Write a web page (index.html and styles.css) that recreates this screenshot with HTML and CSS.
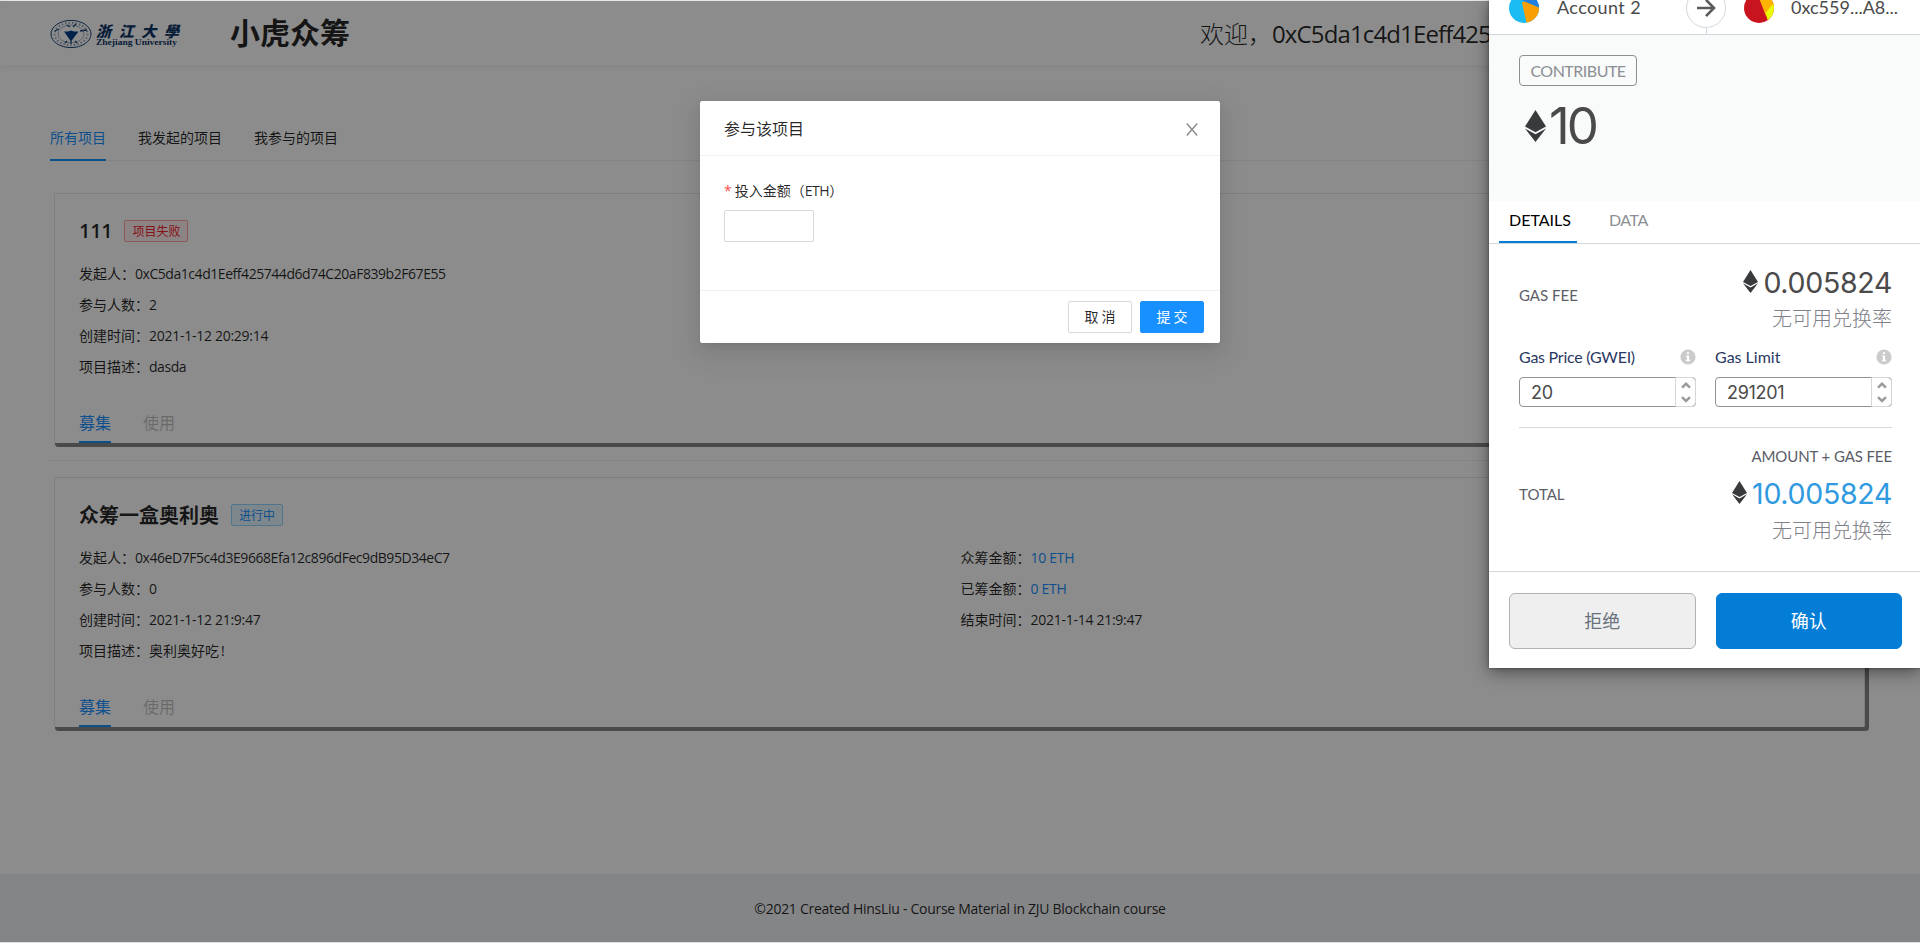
FILE: index.html
```html
<!DOCTYPE html>
<html lang="zh-CN">
<head>
<meta charset="utf-8">
<title>小虎众筹</title>
<link rel="stylesheet" href="styles.css">
</head>
<body>
<svg width="0" height="0" class="defs">
  <symbol id="eth" viewBox="0 0 21 32">
    <path d="M10.5 0 0 16.6 10.5 22.3 21 16.6Z"/>
    <path d="M0 18.4 10.5 32 21 18.4 10.5 24.3Z"/>
  </symbol>
  <symbol id="info" viewBox="0 0 16 16">
    <circle cx="8" cy="8" r="7.6"/>
    <path fill="#fff" d="M6.9 3.2h2.2v1.9H6.9zM6.1 6.4h3v4.4h.9v1.5H6v-1.5h.9V7.9h-.8z"/>
  </symbol>
  <symbol id="steps" viewBox="0 0 10 22">
    <path d="M1 6.6 5 2.8 9 6.600M1 16.200 5 20 9 16.200" fill="none" stroke="#9b9b9b" stroke-width="2.5"/>
  </symbol>
</svg>

<div class="page">
  <header class="header">
    <svg class="logo" width="132" height="32" viewBox="0 0 132 32">
      <g fill="none" stroke="#1b4478">
        <ellipse cx="21" cy="16" rx="20" ry="13.6" stroke-width="1"/>
        <ellipse cx="21" cy="16" rx="16.500" ry="11.2" stroke-width="2" stroke-dasharray="1.500 2" opacity=".5"/>
        <ellipse cx="21" cy="16" rx="13" ry="9" stroke-width=".6" opacity=".7"/>
        <path d="M5 13l4-2M30 13l7-1M17 7l3 2M23 9l3-3M15 25l2-2M21 26v-3M27 25l-2-2" stroke-width="1.3"/>
      </g>
      <path fill="#003f88" d="M14 13.5h4l3-1 3 1h4.500L21 23.500Z"/>
      <text class="logo-cn" x="46" y="18.500" textLength="83">浙江大學</text>
      <text class="logo-en" x="46" y="27" textLength="81" lengthAdjust="spacingAndGlyphs">Zhejiang University</text>
    </svg>
    <h1 class="brand">小虎众筹</h1>
    <div class="welcome">欢迎，<span class="en">0xC5da1c4d1Eeff425744d6d74C20aF839b2F67E55</span></div>
  </header>

  <main class="content">
    <nav class="tabs">
      <span class="tab active">所有项目</span>
      <span class="tab">我发起的项目</span>
      <span class="tab">我参与的项目</span>
    </nav>

    <div class="item">
      <section class="card">
        <div class="card-head"><h2 class="en">111</h2><span class="tag red">项目失败</span></div>
        <div class="cols">
          <div class="col">
            <p>发起人：<span class="en">0xC5da1c4d1Eeff425744d6d74C20aF839b2F67E55</span></p>
            <p>参与人数：<span class="en">2</span></p>
            <p>创建时间：<span class="en date">2021-1-12 20:29:14</span></p>
            <p>项目描述：<span class="en">dasda</span></p>
          </div>
        </div>
        <div class="card-tabs"><span class="active">募集</span><span>使用</span></div>
      </section>
    </div>

    <div class="item last">
      <section class="card">
        <div class="card-head"><h2>众筹一盒奥利奥</h2><span class="tag blue">进行中</span></div>
        <div class="cols">
          <div class="col">
            <p>发起人：<span class="en">0x46eD7F5c4d3E9668Efa12c896dFec9dB95D34eC7</span></p>
            <p>参与人数：<span class="en">0</span></p>
            <p>创建时间：<span class="en date">2021-1-12 21:9:47</span></p>
            <p>项目描述：奥利奥好吃<span class="en bang">!</span></p>
          </div>
          <div class="col second">
            <p>众筹金额：<span class="en money">10 ETH</span></p>
            <p>已筹金额：<span class="en money">0 ETH</span></p>
            <p>结束时间：<span class="en date">2021-1-14 21:9:47</span></p>
          </div>
        </div>
        <div class="card-tabs"><span class="active">募集</span><span>使用</span></div>
      </section>
    </div>
  </main>

  <footer class="footer">©2021 Created HinsLiu - Course Material in ZJU Blockchain course</footer>
</div>

<div class="mask"></div>

<div class="modal">
  <div class="modal-head"><span>参与该项目</span>
    <svg width="12" height="13" viewBox="0 0 12 13"><path d="M.8.6 11.200 12.400M11.200.6.8 12.400" stroke="#8c8c8c" stroke-width="1.5"/></svg>
  </div>
  <div class="modal-body">
    <label class="label"><i>*</i>投入金额（<span class="en">ETH</span>）</label>
    <input class="amount" type="text">
  </div>
  <div class="modal-foot">
    <button class="btn">取 消</button><button class="btn primary">提 交</button>
  </div>
</div>

<aside class="wallet">
  <div class="w-head">
    <svg class="avatar" width="30" height="30" viewBox="0 0 30 30"><clipPath id="c1"><circle cx="15" cy="15" r="15"/></clipPath><g clip-path="url(#c1)"><path fill="#1bbcf4" d="M0 0h30v30H0z"/><path fill="#f89f04" d="M13 9.500 16 8 30 14.500V30H17.500Z"/><path fill="#2080e2" d="M10 0h20v14.500L13.500 7.500Z"/></g></svg>
    <span class="name from">Account 2</span>
    <span class="arrow"><svg width="20" height="20" viewBox="0 0 20 20"><path d="M1 10h16M10 1.800 18 10 10 18.200" fill="none" stroke="#5b5b5b" stroke-width="2.6"/></svg></span>
    <svg class="avatar to-av" width="30" height="30" viewBox="0 0 30 30"><g clip-path="url(#c1)"><path fill="#c8141f" d="M0 0h30v30H0z"/><path fill="#ffb400" d="M13 0h17v14L22 23Z"/><path fill="#e9fb07" d="M30 10 21.500 20 24.500 30H30Z"/></g></svg>
    <span class="name to">0xc559...A8...</span>
  </div>
  <div class="w-summary">
    <span class="method"><span>CONTRIBUTE</span></span>
    <div class="big"><svg width="21" height="32"><use href="#eth"/></svg><span>10</span></div>
  </div>
  <div class="w-tabs"><span class="active"><b>DETAILS</b></span><span class="data"><b>DATA</b></span></div>
  <div class="w-body">
    <div class="fee">
      <span class="cap gasfee">GAS FEE</span>
      <div class="vals">
        <div class="val"><svg width="15" height="23"><use href="#eth"/></svg><span>0.005824</span></div>
        <div class="norate">无可用兑换率</div>
      </div>
    </div>
    <div class="gas">
      <div class="field"><div class="f-label"><span class="gp">Gas Price (GWEI)</span><svg width="16" height="16" fill="#cbcbcb"><use href="#info"/></svg></div>
        <div class="f-input"><span>20</span><i><svg width="10" height="22"><use href="#steps"/></svg></i></div></div>
      <div class="field"><div class="f-label"><span class="gl">Gas Limit</span><svg width="16" height="16" fill="#cbcbcb"><use href="#info"/></svg></div>
        <div class="f-input"><span>291201</span><i><svg width="10" height="22"><use href="#steps"/></svg></i></div></div>
    </div>
    <div class="sum">
      <span class="cap total">TOTAL</span>
      <div class="vals">
        <div class="cap amt">AMOUNT + GAS FEE</div>
        <div class="val blue"><svg width="15" height="23"><use href="#eth"/></svg><span>10.005824</span></div>
        <div class="norate">无可用兑换率</div>
      </div>
    </div>
  </div>
  <div class="w-foot"><button class="w-btn">拒绝</button><button class="w-btn ok">确认</button></div>
</aside>
</body>
</html>
```
FILE: styles.css
```css
* { box-sizing: border-box; }
html, body { margin: 0; height: 943px; overflow: hidden; }
body {
  position: relative;
  padding-top: 1px;
  background: #dee1e6;
  color: rgba(0, 0, 0, .85);
  font: 14px/22px "Noto Sans CJK SC", sans-serif;
}
h1, h2, p { margin: 0; }
svg { display: block; flex: none; }
.defs { position: absolute; }
.en { font-family: "Open Sans", "Noto Sans CJK SC", sans-serif; letter-spacing: -.45px; }
.en.date, .en.money { letter-spacing: -.27px; }
.en.bang { margin-left: 2px; }

.page { display: flex; flex-direction: column; height: 941px; background: #fff; }
.header {
  display: flex; align-items: center; flex: none; height: 64px; padding: 0 50px;
  box-shadow: 0 2px 8px #f0f1f2; overflow: hidden;
  white-space: nowrap;
}
.logo { margin: 2px 48px 0 0; }
.logo-cn { font: italic 900 15px "Noto Sans CJK SC", sans-serif; fill: #0d3566; }
.logo-en { font: bold 7.500px "Liberation Serif", serif; fill: #0d3566; }
.brand { font-size: 30px; line-height: 60px; height: 64px; font-weight: 700; width: 970px; }
.welcome { font-size: 24px; font-weight: 300; line-height: 64px; }
.welcome .en { letter-spacing: -.87px; font-weight: 400; }

.content { flex: 1; padding: 50px 50px 0; }
.tabs { display: flex; gap: 32px; height: 46px; border-bottom: 1px solid #f0f0f0; }
.tab { height: 46px; padding-top: 11px; }
.tab.active { color: #1890ff; border-bottom: 2px solid #1890ff; }
.item { height: 284px; padding: 16px 4px 0; border-bottom: 1px solid #f0f0f0; margin-top: 16px; }
.item.last { margin-top: 0; border: 0; }
.card {
  height: 250px; padding: 24px 24px 0; border: 1px solid #e6e6e6; border-bottom: 0; border-radius: 2px;
  width: 1811px; display: flex; flex-direction: column;
  box-shadow: 2.500px 2.500px 0 1.500px #888;
}
.card-head { display: flex; align-items: center; gap: 12px; height: 26px; }
.card-head h2 { font-size: 20px; line-height: 26px; font-weight: 600; }
.card-head h2.en { letter-spacing: -.3px; }
.tag { font-size: 12px; line-height: 20px; padding: 0 7px; border: 1px solid; border-radius: 2px; }
.tag.red { color: #f5222d; background: #fff1f0; border-color: #ffa39e; }
.tag.blue { color: #1890ff; background: #e6f7ff; border-color: #91d5ff; }
.cols { display: grid; grid-template-columns: 1fr 1fr; margin-top: 18px; flex: 1; }
.col p { height: 31px; line-height: 22px; white-space: nowrap; }
.second { padding-left: 1px; }
.money { color: #1890ff; }
.card-tabs { display: flex; gap: 32px; font-size: 16px; color: rgba(0,0,0,.25); }
.card-tabs span { height: 33px; line-height: 24px; }
.card-tabs .active { color: #1890ff; border-bottom: 2px solid #1890ff; }
.footer {
  flex: none; height: 68px; background: #f0f2f5; text-align: center; line-height: 70px;
  font-family: "Open Sans", sans-serif; letter-spacing: -.28px;
}
.mask { position: absolute; inset: 1px 0; background: rgba(0, 0, 0, .45); }

.modal {
  position: absolute; left: 700px; top: 101px; width: 520px; height: 242px; background: #fff;
  border-radius: 2px; display: flex; flex-direction: column;
  box-shadow: 0 3px 6px -4px rgba(0,0,0,.12), 0 6px 16px rgba(0,0,0,.08), 0 9px 28px 8px rgba(0,0,0,.05);
}
.modal-head {
  display: flex; justify-content: space-between; align-items: center; height: 55px; padding: 0 22px 0 24px;
  border-bottom: 1px solid #f0f0f0; font-size: 16px;
}
.modal-head svg { margin-top: 2px; }
.modal-body { flex: 1; padding: 23px 24px; }
.label { display: block; height: 31px; line-height: 22px; }
.label i { color: #ff4d4f; font: 14px "Open Sans", sans-serif; margin-right: 3px; }
.amount { display: block; width: 90px; height: 32px; border: 1px solid #d9d9d9; border-radius: 2px; }
.modal-foot { display: flex; justify-content: flex-end; gap: 8px; padding: 10px 16px; border-top: 1px solid #f0f0f0; }
.btn {
  width: 64px; height: 32px; padding: 0 0 2px; border: 1px solid #d9d9d9; border-radius: 2px; background: #fff;
  color: rgba(0,0,0,.85); font: 14px "Noto Sans CJK SC", sans-serif;
}
.btn.primary { background: #1890ff; border-color: #1890ff; color: #fff; }

.wallet {
  position: absolute; left: 1489px; top: 0; width: 431px; height: 668px; background: #fff;
  font: 16px/20px Lato, "Noto Sans CJK SC", sans-serif; color: #4a4a4a; white-space: nowrap;
  display: flex; flex-direction: column;
  box-shadow: 0 0 3px rgba(0,0,0,.4), 0 4px 16px rgba(0,0,0,.45);
}
.w-head { display: flex; height: 35px; flex: none; border-bottom: 1px solid #d2d8dd; padding-left: 20px; }
.avatar { margin-top: -7px; }
.name { font-size: 18px; line-height: 20px; margin-top: -3px; }
.from { margin-left: 18px; width: 129px; letter-spacing: .4px; }
.arrow { width: 40px; height: 40px; margin-top: -12px; border: 1px solid #d2d8dd; border-radius: 50%; display: grid; place-items: center; position: relative; }
.arrow::after { content: ""; position: absolute; left: 19px; top: 39px; width: 1px; height: 7px; background: #d2d8dd; }
.to-av { margin-left: 18px; }
.to { margin-left: 17px; }
.w-summary { height: 166px; flex: none; background: #f9fafa; padding: 20px 30px; }
.method { display: grid; place-items: center; width: 118px; height: 31px; border: 1px solid #8c8e94; border-radius: 4px; color: #8c8e94; letter-spacing: -.5px; }
.big { display: flex; align-items: center; gap: 3px; padding-left: 6px; margin-top: 14px; height: 52px; font: 51px/52px Inter, sans-serif; letter-spacing: -3px; }
.big svg, .val svg { fill: #393a3c; }
.w-tabs { display: flex; flex: none; height: 43px; border-bottom: 1px solid #d2d8dd; padding-left: 10px; gap: 22px; color: #8c8e94; }
.w-tabs span { height: 42px; padding: 9px 10px 0; }
.w-tabs b { font-weight: 400; display: block; }
.w-tabs .active { color: #000; border-bottom: 2px solid #037dd6; width: 78px; }
.data { letter-spacing: -.5px; }
.w-body { flex: 1; padding: 22px 28px 0 30px; }
.fee, .sum { display: flex; justify-content: space-between; align-items: center; }
.vals { display: flex; flex-direction: column; align-items: flex-end; }
.cap { font-size: 15px; color: #5b5d67; }
.gasfee { padding-bottom: 13px; }
.total { padding-bottom: 7px; }
.val { display: flex; align-items: center; gap: 5px; font: 28.500px/32px Inter, sans-serif; height: 34px; letter-spacing: -.3px; }
.val svg { margin-top: -3px; }
.val.blue { color: #2f9ae0; }
.norate { font-size: 20px; line-height: 32px; font-weight: 300; color: #7f8188; height: 34px; margin-top: 2px; }
.sum .norate { margin-top: 3px; }
.gas { display: flex; gap: 19px; margin-top: 11px; padding-bottom: 20px; border-bottom: 1px solid #d6d8da; }
.field { width: 177px; }
.f-label { display: flex; justify-content: space-between; align-items: center; height: 20px; color: #2a3763; margin-bottom: 10px; }
.gp { letter-spacing: -.25px; }
.f-input { display: flex; justify-content: space-between; height: 30px; border: 1px solid #8f9193; border-radius: 4px; padding-left: 11px; font: 18px/30px Inter, sans-serif; letter-spacing: -.3px; }
.f-input i { width: 21px; display: grid; place-items: center; margin: -1px; border: 1px solid #d6d6d6; border-radius: 0 4px 4px 0; }
.sum { margin-top: 18px; }
.amt { margin-bottom: 11px; line-height: 20px; letter-spacing: -.1px; }
.w-foot { flex: none; height: 97px; border-top: 1px solid #d2d8dd; display: flex; gap: 20px; padding: 21px 18px 0 20px; }
.w-btn { flex: 1; height: 56px; padding: 0 0 2px; border: 1px solid #b0b1b2; border-radius: 6px; background: #efefef; color: #6a737d; font: 18px "Noto Sans CJK SC", sans-serif; }
.w-btn.ok { background: #037dd6; border-color: #037dd6; color: #fff; }
```
